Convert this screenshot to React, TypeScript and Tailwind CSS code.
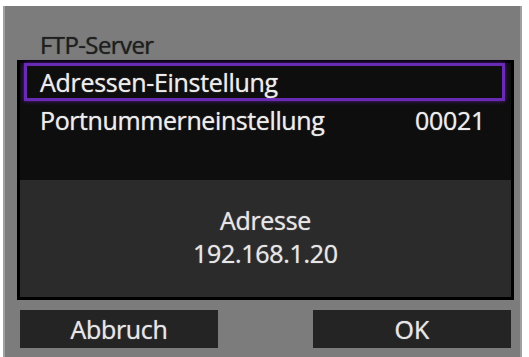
export default function App() {
  return (
    <div className="w-[529px] h-[357px] bg-white pt-[6px] pl-[3px] pr-[7px] font-['Open_Sans',sans-serif] overflow-hidden">
      <div className="h-full bg-[#7c7c7c] border-l-2 border-r-2 border-[#a0a0a0] pl-[12px] pr-[6px] flex flex-col">
        <div className="h-[54px] flex items-end pb-[3px] pl-[23px]">
          <span className="text-[24px] leading-none tracking-[-0.6px] text-[#1e1e1e] [text-shadow:0_0_1px_rgba(0,0,0,0.6)]">FTP-Server</span>
        </div>
        <div className="h-[240px] border-[3px] border-black flex flex-col">
          <div className="h-[117px] bg-[#0e0e0e] pl-[4px] pr-[6px] flex flex-col">
            <div className="h-[38px] border-[3px] border-[#6a2bb4] shadow-[0_0_4px_#5a1f9a] flex items-center pl-[13px]">
              <span className="text-[25px] leading-none text-[#ececec] tracking-[-0.3px] [text-shadow:0_0_1px_rgba(255,255,255,0.7)]">Adressen-Einstellung</span>
            </div>
            <div className="h-[38px] flex items-center justify-between pl-[16px] pr-[20px]">
              <span className="text-[25px] leading-none text-[#ececec] tracking-[-0.4px] [text-shadow:0_0_1px_rgba(255,255,255,0.7)]">Portnummerneinstellung</span>
              <span className="text-[25px] leading-none text-[#ececec] tracking-[-0.3px] [text-shadow:0_0_1px_rgba(255,255,255,0.7)]">00021</span>
            </div>
          </div>
          <div className="flex-1 bg-[#2b2b2b] flex flex-col items-center justify-center gap-[8px] pb-[4px]">
            <span className="text-[25px] leading-none text-[#e6e6e6] tracking-[-0.3px] [text-shadow:0_0_1px_rgba(255,255,255,0.7)]">Adresse</span>
            <span className="text-[25px] leading-none text-[#e6e6e6] tracking-[-0.3px] [text-shadow:0_0_1px_rgba(255,255,255,0.7)]">192.168.1.20</span>
          </div>
        </div>
        <div className="flex justify-between mt-[10px] pl-[3px] pr-[3px]">
          <div className="w-[198px] h-[38px] bg-[#242424] flex items-center justify-center">
            <span className="text-[25px] leading-none text-[#e6e6e6] tracking-[-0.3px] [text-shadow:0_0_1px_rgba(255,255,255,0.7)]">Abbruch</span>
          </div>
          <div className="w-[198px] h-[38px] bg-[#242424] flex items-center justify-center">
            <span className="text-[25px] leading-none text-[#e6e6e6] [text-shadow:0_0_1px_rgba(255,255,255,0.7)]">OK</span>
          </div>
        </div>
      </div>
    </div>
  );
}
